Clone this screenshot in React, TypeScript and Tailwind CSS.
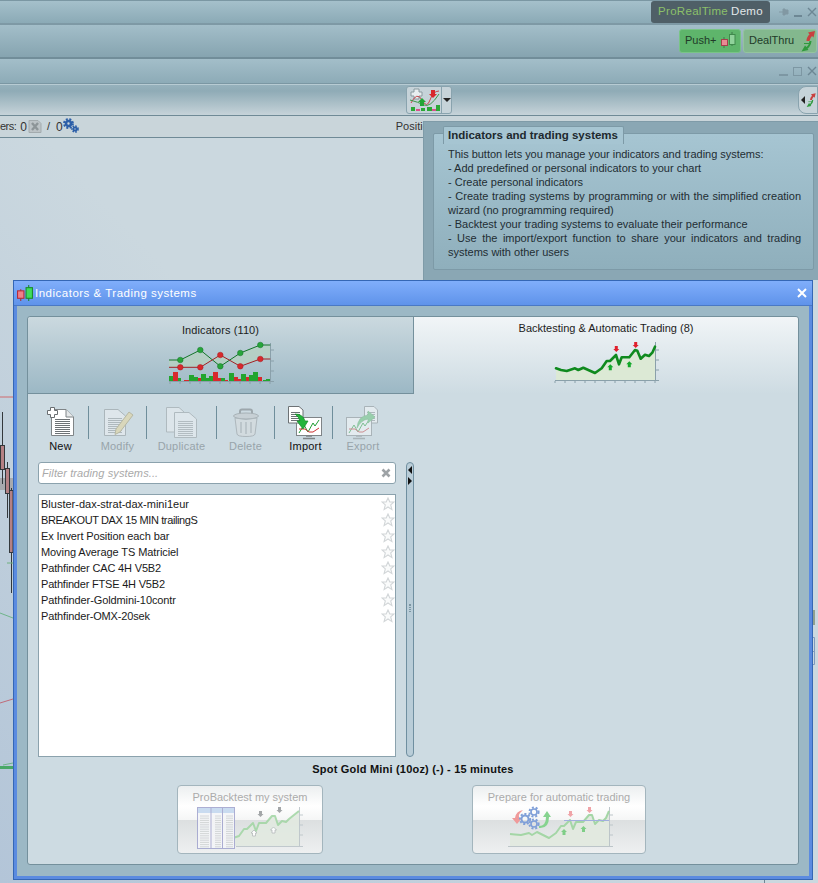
import React from "react";

const systems = [
  { name: "Bluster-dax-strat-dax-mini1eur", cls: "tracking-normal" },
  { name: "BREAKOUT DAX 15 MIN trailingS", cls: "tracking-[-0.37px]" },
  { name: "Ex Invert Position each bar", cls: "tracking-[-0.12px]" },
  { name: "Moving Average TS Matriciel", cls: "tracking-[-0.08px]" },
  { name: "Pathfinder CAC 4H V5B2", cls: "tracking-[-0.16px]" },
  { name: "Pathfinder FTSE 4H V5B2", cls: "tracking-[-0.2px]" },
  { name: "Pathfinder-Goldmini-10contr", cls: "tracking-[-0.1px]" },
  { name: "Pathfinder-OMX-20sek", cls: "tracking-[-0.15px]" },
];

const backtestLine =
  "556,368.3 561,370 566.7,371 575,368.3 578.3,370 583.3,367.7 595,373 601.7,368.3 606.7,361 610,361 616,355 619,364.3 621.7,357.3 629.3,357.3 635,350 637.3,350.7 640.7,358.7 645,354.7 649,356 652.3,352.7 655,346.7";

function Sep() {
  return <div className="w-px h-[33px] bg-[#6f8e9b] shrink-0 self-start" />;
}

function DocLines({ x, y, w, n, c = "#8a8f92" }: { x: number; y: number; w: number; n: number; c?: string }) {
  return (
    <g stroke={c} strokeWidth="1">
      {Array.from({ length: n }).map((_, i) => (
        <line key={i} x1={x} x2={x + w} y1={y + i * 2 + 0.5} y2={y + i * 2 + 0.5} />
      ))}
    </g>
  );
}

function NewIcon() {
  return (
    <svg width="30" height="32" viewBox="0 0 30 32">
      <path d="M5.5 3.5H20L27.5 11V29.5H5.5Z" fill="#fff" stroke="#7f8487" />
      <path d="M20 3.5V11H27.5" fill="#e6e9ea" stroke="#7f8487" />
      <DocLines x={9} y={13} w={15} n={8} c="#6d7275" />
      <path d="M4.5 1.5H8.5V4.5H11.5V8.5H8.5V11.5H4.5V8.5H1.5V4.5H4.5Z" fill="#fff" stroke="#6a6f72" />
    </svg>
  );
}

function ModifyIcon() {
  return (
    <svg width="34" height="32" viewBox="0 0 34 32" className="opacity-45">
      <path d="M3.5 3.5H17L24.5 10V29.5H3.5Z" fill="#f3f5f6" stroke="#848a8d" />
      <DocLines x={7} y={12} w={14} n={8} />
      <path d="M28 6L32 9L19 26L14 28.5L15 23Z" fill="#e8d48c" stroke="#9b8d58" />
    </svg>
  );
}

function DuplicateIcon() {
  return (
    <svg width="34" height="33" viewBox="0 0 34 33" className="opacity-40">
      <path d="M1.5 1.5H14L19 6V26H1.5Z" fill="#f3f5f6" stroke="#848a8d" />
      <path d="M9.5 6.5H24L31.5 13V31.5H9.5Z" fill="#f7f8f9" stroke="#848a8d" />
      <DocLines x={13} y={15} w={15} n={8} />
    </svg>
  );
}

function DeleteIcon() {
  return (
    <svg width="30" height="30" viewBox="0 0 30 30" className="opacity-50">
      <path d="M9 6V3.5Q9 1.5 11 1.5H19Q21 1.5 21 3.5V6" fill="none" stroke="#6f7578" strokeWidth="2" />
      <ellipse cx="15" cy="8" rx="12.5" ry="3" fill="#c2c7ca" stroke="#82888b" />
      <path d="M4 10L6 26Q6.5 28.5 15 28.5Q23.5 28.5 24 26L26 10Q15 13 4 10Z" fill="#d8dcde" stroke="#8e9497" />
      <path d="M10 14V25M15 14V26M20 14V25" stroke="#9ca2a5" strokeWidth="1.5" />
    </svg>
  );
}

function ScreenChart() {
  return (
    <g>
      <rect x="13.5" y="11.5" width="25" height="18" fill="#fff" stroke="#7f8487" />
      <path d="M16 27L21 19L25 26L30 17L32 20L36 14" fill="none" stroke="#1f9d33" strokeWidth="1" />
      <path d="M16 23H22L26 26H30L36 22" fill="none" stroke="#c33" strokeWidth="1" />
      <path d="M23 30H29M20 32.5H32" stroke="#7f8487" strokeWidth="1.5" />
    </g>
  );
}

function ImportIcon() {
  return (
    <svg width="34" height="34" viewBox="0 0 34 34" className="overflow-visible">
      <g transform="translate(-5 0)">
        <ScreenChart />
      </g>
      <path d="M0.5 0.5H11L15 4V17H0.5Z" fill="#fff" stroke="#6d7275" />
      <DocLines x={3} y={6} w={9} n={5} c="#6d7275" />
      <path d="M7 8Q15 8 17 15H20L15 23L9 15H12Q11 11 7 8Z" fill="#23b43c" stroke="#128a27" strokeWidth="0.7" />
    </svg>
  );
}

function ExportIcon() {
  return (
    <svg width="34" height="34" viewBox="0 0 34 34" className="opacity-45 overflow-visible">
      <path d="M18.5 0.5H28L31.5 4V17H18.5Z" fill="#fff" stroke="#7f8487" />
      <DocLines x={21} y={6} w={8} n={5} />
      <g transform="translate(-13 0)">
        <ScreenChart />
      </g>
      <path d="M11 22Q12 10 22 9V5L29 11L22 17V13Q15 14 11 22Z" fill="#59c06b" stroke="#3f9f50" strokeWidth="0.6" />
    </svg>
  );
}

function Star() {
  return (
    <svg width="14" height="14" viewBox="0 0 14 14">
      <path
        d="M7 1L8.8 5H13L9.7 7.9L10.9 12.6L7 10L3.1 12.6L4.3 7.9L1 5H5.2Z"
        fill="#fafbfb"
        stroke="#d2d6d8"
        strokeWidth="1.1"
      />
    </svg>
  );
}

function DownArrow({ x, y, c }: { x: number; y: number; c: string }) {
  return <path d={`M${x - 1.5} ${y - 3}H${x + 1.5}V${y}H${x + 3}L${x} ${y + 3}L${x - 3} ${y}H${x - 1.5}Z`} fill={c} />;
}

function UpArrow({ x, y, c, s }: { x: number; y: number; c: string; s?: string }) {
  return (
    <path
      d={`M${x} ${y - 3}L${x + 3} ${y}H${x + 1.5}V${y + 3}H${x - 1.5}V${y}H${x - 3}Z`}
      fill={c}
      stroke={s}
      strokeWidth={s ? 0.7 : 0}
    />
  );
}

function Ticks({ x0, y, n, step }: { x0: number; y: number; n: number; step: number }) {
  return (
    <g stroke="#8aa0aa" strokeWidth="1">
      {Array.from({ length: n }).map((_, i) => (
        <line key={i} x1={x0 + i * step} x2={x0 + i * step} y1={y} y2={y + 2} />
      ))}
    </g>
  );
}

function IndicatorsChart() {
  const bars: [number, number, number, string][] = [
    [168, 4, 5, "g"], [172, 5, 9, "r"], [177, 3, 3, "g"], [183, 5, 1, "r"], [188, 5, 6, "g"], [193, 4, 4, "g"],
    [197, 3, 3, "r"], [200, 5, 7, "g"], [205, 3, 3, "g"], [208, 4, 5, "g"], [212, 5, 9, "r"], [217, 3, 3, "r"],
    [220, 4, 3, "g"], [224, 3, 1, "r"], [228, 5, 8, "g"], [233, 4, 4, "r"], [237, 3, 2, "r"], [240, 5, 7, "g"],
    [245, 3, 4, "r"], [248, 4, 6, "g"], [252, 5, 9, "g"], [257, 4, 4, "r"], [262, 3, 1, "g"], [265, 4, 2, "g"],
  ];
  return (
    <svg width="120" height="50" viewBox="160 340 120 50">
      <polygon points="168,361 179.3,361 199.3,351 219.3,367.3 239.3,354 259.3,346 269.3,346 269.3,360 259.3,360 239.3,367.3 219.3,356 199.3,368.3 179.3,368.3 168,368.3" fill="#b5d2c0" opacity="0.75" />
      {bars.map(([x, w, h, c], i) => (
        <rect key={i} x={x} y={382 - h} width={w} height={h} fill={c === "g" ? "#23a52f" : "#d8282c"} />
      ))}
      <path d="M269.5 344V382.5M168 382.5H273M269.5 351H273M269.5 362H273M269.5 372H273" stroke="#8aa0aa" fill="none" />
      <Ticks x0={169} y={383} n={11} step={10} />
      <polyline points="168,361 179.3,361 199.3,351 219.3,367.3 239.3,354 259.3,346 269.3,346" fill="none" stroke="#14752a" />
      <polyline points="168,368.3 179.3,368.3 199.3,368.3 219.3,356 239.3,367.3 259.3,360 269.3,360" fill="none" stroke="#a32024" />
      {[[179.3, 361], [199.3, 351], [219.3, 367.3], [239.3, 354], [259.3, 346]].map(([x, y], i) => (
        <circle key={i} cx={x} cy={y} r="2.8" fill="#27a53a" stroke="#14752a" strokeWidth="0.5" />
      ))}
      {[[179.3, 368.3], [199.3, 368.3], [219.3, 356], [239.3, 367.3], [259.3, 360]].map(([x, y], i) => (
        <circle key={i} cx={x} cy={y} r="2.8" fill="#d8282c" stroke="#a32024" strokeWidth="0.5" />
      ))}
    </svg>
  );
}

function BacktestChart() {
  return (
    <svg width="120" height="50" viewBox="546 340 120 50">
      <polygon points={`${backtestLine} 655,380 556,380`} fill="#dce9d5" />
      <path d="M655.5 342V380.5M555 380.5H659M655.5 350H659M655.5 360H659M655.5 370H659" stroke="#8aa0aa" fill="none" />
      <Ticks x0={555} y={381} n={11} step={10} />
      <polyline points={backtestLine} fill="none" stroke="#0f8a1e" strokeWidth="2.6" strokeLinejoin="round" strokeLinecap="round" />
      <DownArrow x={616.3} y={349} c="#e0202c" />
      <DownArrow x={635.7} y={345} c="#e0202c" />
      <UpArrow x={610.3} y={367.3} c="#12a82a" />
      <UpArrow x={629.3} y={364.3} c="#12a82a" />
    </svg>
  );
}

function ProBacktestArt() {
  const pts = "232,838 238,836 243,829 246,829 252,823 255,831 258,823 265,823 271,816 274,816 277,825 281,821 285,822 288,819 298,811";
  return (
    <svg width="146" height="52" viewBox="177 802 146 52" className="opacity-90">
      <polygon points={`${pts} 298,846 232,846`} fill="#e2e9e0" />
      <path d="M298.5 807V846.5M235 846.5H302M298.5 815H302M298.5 825H302M298.5 835H302" stroke="#bcc5c9" fill="none" />
      <polyline points={pts} fill="none" stroke="#a4d6a6" strokeWidth="2" strokeLinejoin="round" />
      <DownArrow x={259.5} y={814} c="#9a9d9f" />
      <DownArrow x={278.5} y={810} c="#9a9d9f" />
      <UpArrow x={253} y={833} c="#fff" s="#a8adaf" />
      <UpArrow x={272.5} y={830} c="#fff" s="#a8adaf" />
      <rect x="196.5" y="807.5" width="37" height="41" fill="#f4f6f8" stroke="#a4a6cf" />
      <rect x="197" y="808" width="36" height="5" fill="#c4d8ef" />
      <path d="M210 808V848M221.5 808V848" stroke="#a4a6cf" />
      {Array.from({ length: 15 }).map((_, i) => (
        <path key={i} d={`M199 ${816 + i * 2.2}H208M214 ${816 + i * 2.2}H220M225 ${816 + i * 2.2}H232`} stroke="#c6c9cc" strokeWidth="0.8" />
      ))}
    </svg>
  );
}

function AutoTradeArt() {
  const pts = "509,834 514,834.5 520,835 528,833 531,835 536,832 548,838 555,833 560,826 563,826 569,820 572,829 575,822 582,822 588,815 591,815 594,824 598,820 602,821 605,818 608,811";
  const Gear = ({ x, y, r }: { x: number; y: number; r: number }) => (
    <g fill="none" stroke="#7f9fd8">
      <circle cx={x} cy={y} r={r} strokeWidth={r * 0.55} />
      <circle cx={x} cy={y} r={r + 1.6} strokeWidth="2" strokeDasharray="2 1.8" />
    </g>
  );
  return (
    <svg width="174" height="52" viewBox="472 802 174 52">
      <polygon points={`${pts} 608,846 509,846`} fill="#e2e9e0" />
      <path d="M608.5 807V846.5M507 846.5H612M608.5 815H612M608.5 825H612M608.5 835H612" stroke="#bcc5c9" fill="none" />
      <polyline points={pts} fill="none" stroke="#a4d6a6" strokeWidth="2" strokeLinejoin="round" />
      <path d="M563 820.5H608" stroke="#a0aede" strokeWidth="1" />
      <DownArrow x={569.5} y={814} c="#f0a4a8" />
      <DownArrow x={588.5} y={810} c="#f0a4a8" />
      <UpArrow x={563} y={832} c="#7fce87" />
      <UpArrow x={582.5} y={829} c="#7fce87" />
      <path d="M516 824L511 818H514Q515 811 522 810L519 813Q517 815 518 818H521Z" fill="#ef9a9a" />
      <Gear x={524} y={819} r={3.5} />
      <Gear x={533} y={812} r={3} />
      <Gear x={533} y={824} r={3} />
      <path d="M538 826Q545 826 545 817H542L546 811L550 817H548Q548 829 538 828Z" fill="#86d38f" />
    </svg>
  );
}

function DealThruIcon({ w = 18, h = 22 }: { w?: number; h?: number }) {
  return (
    <svg width={w} height={h} viewBox="0 0 18 22">
      <path d="M16 1L9 2.5L10.5 4.5Q7.5 7 7.5 11H10.5Q11 8 13 6L14.5 7.5Z" fill="#c8413f" />
      <path d="M10.5 11Q10 15 7.5 17L6 15.5L2.5 21.5L9.5 20L8.5 18.8Q12 16 12.5 11Z" fill="#2f9a3d" />
      <path d="M5 13.5H12" stroke="#2f9a3d" strokeWidth="1" />
    </svg>
  );
}

function BackgroundChart() {
  return (
    <svg className="absolute left-0 top-0 pointer-events-none" width="818" height="883" viewBox="0 0 818 883">
      <path d="M0 397H13" stroke="#d06a6e" />
      <rect x="0" y="478" width="13" height="12" fill="#a7a9ae" />
      <path d="M2.5 412V484M7.5 462V518M11.5 488V593" stroke="#33383c" />
      <rect x="0.5" y="445.5" width="4" height="24" fill="#b48185" stroke="#33383c" />
      <rect x="5.5" y="468.5" width="4" height="25" fill="#b48185" stroke="#33383c" />
      <rect x="9.5" y="490.5" width="3.5" height="62" fill="#b48185" stroke="#33383c" />
      <path d="M7 563H13" stroke="#6fb07e" />
      <path d="M0 613L13 618" stroke="#6fb58a" />
      <path d="M0 703L13 699" stroke="#c06b78" />
      <rect x="0" y="766" width="13" height="3" fill="#49a868" />
      <path d="M3 765L13 763" stroke="#6fb58a" />
      <rect x="813" y="610" width="2" height="15" fill="#8f9f8f" />
      <path d="M813 637.5H814.5V651.5H813M813 651.5H814.5V664.5H813" fill="none" stroke="#7f98bd" />
      <path d="M764.5 880V883" stroke="#6f8694" />
    </svg>
  );
}

function ChartButton() {
  return (
    <div className="w-[50px] h-[28px] flex rounded-[3px] border border-[#89a3ae] bg-[#c6d3d9] mt-[1px]">
      <div className="w-[35px] border-r border-[#89a3ae] flex items-center justify-center">
        <svg width="33" height="24" viewBox="0 0 33 24">
          <path d="M3 4H6V1H11V4H14V8H11V11H6V8H3Z" fill="#e8eef0" stroke="#8a9a9f" />
          <path d="M3 15Q9 3 14 12T22 12T31 3" fill="none" stroke="#c4464a" />
          <path d="M2 12Q10 14 16 17T31 6" fill="none" stroke="#3a9a4a" />
          <path d="M23 2H27V6H29L25 10L21 6H23Z" fill="#d8282c" />
          <path d="M14 10L18 14H16V18H12V14H10Z" fill="#22a535" />
          <path d="M3 19H7V23H3ZM19 19H24V23H19ZM28 17H32V23H28ZM13 20H17V23H13Z" fill="#2aa836" />
          <path d="M8 21H12V23H8ZM24 21H28V23H24Z" fill="#d8508a" />
        </svg>
      </div>
      <div className="flex-1 flex items-center justify-center">
        <div className="w-0 h-0 border-x-[4px] border-x-transparent border-t-[4px] border-t-[#222]" />
      </div>
    </div>
  );
}

export default function App() {
  return (
    <div className="relative w-[818px] h-[883px] overflow-hidden font-['Liberation_Sans',Arial,sans-serif] text-[11px] text-[#1c1c1c] bg-[#c7d4da]">
      <div className="flex flex-col h-full bg-[linear-gradient(to_bottom_left,#cbd8df_55%,#b3c5d8)]">
        {/* window title row */}
        <div className="h-[25px] shrink-0 border-t border-[#7b97a3] border-b-2 border-b-[#7e99a5] bg-linear-to-b from-[#a5c0cb] to-[#8baab6] flex items-center justify-end">
          <div className="w-[119px] h-[22px] rounded-[3px] bg-[#4f5f67] flex items-center justify-center text-[11.5px] tracking-[0.3px]">
            <span className="text-[#8cc06a]">ProRealTime</span>
            <span className="text-[#e3e8ea] ml-[3px]">Demo</span>
          </div>
          <div className="w-[48px] flex items-center gap-[5px] pl-[8px]">
            <svg width="11" height="10" viewBox="0 0 11 10">
              <path d="M1 5H5M5 2H7V8H5ZM7 3H10V7H7Z" fill="#8198a3" stroke="#8198a3" />
            </svg>
            <div className="w-[8px] h-[2px] bg-[#6d8794] mt-[8px]" />
            <svg width="10" height="10" viewBox="0 0 10 10">
              <path d="M1 1L9 9M9 1L1 9" stroke="#6d8794" strokeWidth="1.4" />
            </svg>
          </div>
        </div>
        {/* order buttons row */}
        <div className="h-[34px] shrink-0 border-b-2 border-b-[#718d99] bg-linear-to-b from-[#a3bec9] to-[#86a4b0] flex items-center justify-end gap-[2px] pr-px pb-[1px]">
          <div className="w-[62px] h-[24px] rounded-[3px] bg-[#5eb56b] border border-[#79c486] flex items-center pl-[5px] text-[#213a28]">
            <span>Push+</span>
            <svg className="ml-[3px]" width="16" height="18" viewBox="0 0 16 18">
              <path d="M4 5V16M12 0V14" stroke="#3f7a4c" />
              <rect x="1.5" y="7.5" width="6" height="6" fill="#e98a94" stroke="#a5404c" />
              <rect x="9.5" y="2.5" width="5.5" height="10" fill="#8fd29a" stroke="#3f8a4c" />
            </svg>
          </div>
          <div className="w-[74px] h-[24px] rounded-[3px] bg-[#83b88e] border border-[#94c49e] flex items-center pl-[5px] text-[#213a28]">
            <span>DealThru</span>
            <span className="ml-[5px]">
              <DealThruIcon w={18} h={22} />
            </span>
          </div>
        </div>
        {/* chart title row */}
        <div className="h-[25px] shrink-0 border-b border-b-[#7b97a3] bg-linear-to-b from-[#a3bec9] to-[#8dabb7] flex items-center justify-end gap-[5px] pr-px">
          <div className="w-[9px] h-[2px] bg-[#7d97a3] mt-[7px]" />
          <div className="w-[9px] h-[9px] border border-[#7d97a3]" />
          <svg width="10" height="10" viewBox="0 0 10 10">
            <path d="M1 1L9 9M9 1L1 9" stroke="#6d8794" strokeWidth="1.4" />
          </svg>
        </div>
        {/* chart toolbar */}
        <div className="h-[32px] shrink-0 border-t border-t-[#b7cbd3] border-b border-b-[#6f8a96] bg-[linear-gradient(to_bottom,#96b1bc,#8fabb6_20%,#c6d3d9)] flex items-start pl-[406px]">
          <ChartButton />
          <div className="ml-[346px] mt-[1px] w-[20px] h-[28px] rounded-l-[8px] border border-[#89a3ae] bg-[#c6d3d9] flex items-center pl-[2px]">
            <div className="w-0 h-0 border-y-[4px] border-y-transparent border-r-[4px] border-r-[#222]" />
            <DealThruIcon w={12} h={24} />
          </div>
        </div>
        {/* positions status row */}
        <div className="h-[22px] shrink-0 border-b border-b-[#6f8a96] bg-[#c9d5da] flex items-center text-[#333]">
          <span className="tracking-[-0.5px]">ers:</span>
          <span className="ml-[4px] text-[12px]">0</span>
          <svg className="ml-[1px]" width="14" height="13" viewBox="0 0 14 13">
            <path d="M1 .5H10L13 3.5V12.5H1Z" fill="#bcc3c6" stroke="#a3abae" />
            <path d="M4 3L10 10M10 3L4 10" stroke="#8d9598" strokeWidth="2.4" />
          </svg>
          <span className="ml-[5px]">/</span>
          <span className="ml-[6px] text-[12px]">0</span>
          <svg className="-mt-[3px]" width="16" height="15" viewBox="0 0 16 15">
            <g fill="none" stroke="#2c5fa8">
              <circle cx="5.5" cy="5.5" r="2.5" strokeWidth="2.6" />
              <circle cx="5.5" cy="5.5" r="4.4" strokeWidth="2" strokeDasharray="2 1.5" />
              <circle cx="12" cy="11" r="1.6" strokeWidth="1.8" />
              <circle cx="12" cy="11" r="3" strokeWidth="1.6" strokeDasharray="1.6 1.2" />
            </g>
          </svg>
          <span className="ml-[317px]">Positions</span>
        </div>
        <div className="flex-1" />
      </div>

      <BackgroundChart />

      {/* Help callout over the toolbar */}
      <div className="absolute left-[423px] top-[121px] w-[395px] h-[159px] bg-[#8aa7b4] border-l border-t border-[#7f9ba8] pt-[11px] pl-[9px] pr-[4px] text-[#222d33]">
        <div className="relative h-[137px] rounded-[2px] border border-[#7d9aa7] bg-linear-to-b from-[#a6c5d2] to-[#8fafbc] pl-[14px] pr-[12px] pt-[13px]">
          <div className="absolute left-[9px] -top-[8px] w-[181px] h-[18px] rounded-t-[2px] border border-b-0 border-[#7d9aa7] bg-[#a6c5d2] pl-[4px] font-bold text-[11.5px] leading-[16px] text-[#20292e] whitespace-nowrap">
            Indicators and trading systems
          </div>
          <div className="leading-[14px] text-justify text-[11px]">
            <p className="text-left whitespace-nowrap tracking-[-0.03px]">This button lets you manage your indicators and trading systems:</p>
            <p className="text-left whitespace-nowrap">- Add predefined or personal indicators to your chart</p>
            <p className="text-left whitespace-nowrap">- Create personal indicators</p>
            <p>- Create trading systems by programming or with the simplified creation wizard (no programming required)</p>
            <p className="text-left whitespace-nowrap">- Backtest your trading systems to evaluate their performance</p>
            <p>- Use the import/export function to share your indicators and trading systems with other users</p>
          </div>
        </div>
      </div>

      {/* Indicators & Trading systems dialog */}
      <div className="absolute left-[13px] top-[280px] w-[800px] h-[600px] border border-[#3567b5] bg-[#5b8be0] flex flex-col pb-[3px] pl-[3px] pr-[3px]">
        <div className="h-[25px] shrink-0 -mx-[3px] border-b border-b-[#4a79c4] bg-linear-to-b from-[#80aefb] to-[#5f93ea] flex items-center pl-[3px] pr-[5px]">
          <svg width="16" height="17" viewBox="0 0 15 16">
            <path d="M3.5 4V15" stroke="#a83030" />
            <path d="M11 0V15" stroke="#1a8a2a" />
            <rect x="0.5" y="5.5" width="6" height="7" fill="#f0808a" stroke="#b52a35" />
            <rect x="8.5" y="2.5" width="6" height="10" fill="#3fdc5c" stroke="#1a8a2a" />
          </svg>
          <span className="ml-[2px] mt-[2px] text-white text-[11.5px] tracking-[0.5px]">Indicators &amp; Trading systems</span>
          <svg className="ml-auto" width="10" height="10" viewBox="0 0 10 10">
            <path d="M1 1L9 9M9 1L1 9" stroke="#fff" strokeWidth="2" />
          </svg>
        </div>
        <div className="flex-1 min-h-0 bg-[#9cb8c5] pt-[10px] px-[10px] pb-[11px] flex flex-col">
          <div className="flex-1 min-h-0 flex flex-col rounded-[3px] border border-[#74909c] bg-[#cddbe2]">
            {/* Tabs */}
            <div className="flex h-[77px] shrink-0">
              <div className="w-[386px] shrink-0 rounded-tl-[3px] border-b border-b-[#74909c] border-r border-r-[#74909c] bg-linear-to-b from-[#cbd9df] to-[#9cb8c5] flex flex-col items-center pt-[6px]">
                <span className="tracking-[0.1px] leading-[14px]">Indicators (110)</span>
                <div className="mt-[2px]">
                  <IndicatorsChart />
                </div>
              </div>
              <div className="flex-1 rounded-tr-[3px] bg-linear-to-b from-[#f1f5f7] to-[#cddbe2] flex flex-col items-center pt-[4px]">
                <span className="leading-[14px]">Backtesting &amp; Automatic Trading (8)</span>
                <div className="mt-[5px]">
                  <BacktestChart />
                </div>
              </div>
            </div>
            {/* Tab content */}
            <div className="flex-1 min-h-0 flex flex-col pl-[10px] pb-[10px]">
              <div className="flex-1 min-h-0 flex gap-[10px]">
                <div className="w-[358px] shrink-0 flex flex-col">
                  {/* Actions */}
                  <div className="h-[68px] shrink-0 pt-[12px] flex -ml-[5px]">
                    <div className="w-[55px] flex flex-col items-center text-[#111]">
                      <div className="h-[33px]"><NewIcon /></div>
                      <span className="leading-[14px] tracking-[0.2px]">New</span>
                    </div>
                    <Sep />
                    <div className="w-[57px] flex flex-col items-center text-[#98a4aa]">
                      <div className="h-[33px]"><ModifyIcon /></div>
                      <span className="leading-[14px] tracking-[0.2px]">Modify</span>
                    </div>
                    <Sep />
                    <div className="w-[69px] flex flex-col items-center text-[#98a4aa]">
                      <div className="h-[33px]"><DuplicateIcon /></div>
                      <span className="leading-[14px] tracking-[0.2px]">Duplicate</span>
                    </div>
                    <Sep />
                    <div className="w-[57px] flex flex-col items-center text-[#98a4aa]">
                      <div className="h-[33px] pt-[2px]"><DeleteIcon /></div>
                      <span className="leading-[14px] tracking-[0.2px]">Delete</span>
                    </div>
                    <Sep />
                    <div className="w-[57px] flex flex-col items-center text-[#111]">
                      <div className="h-[33px] pl-[2px]"><ImportIcon /></div>
                      <span className="leading-[14px] tracking-[0.2px] pl-[4px]">Import</span>
                    </div>
                    <Sep />
                    <div className="w-[60px] flex flex-col items-center text-[#98a4aa]">
                      <div className="h-[33px]"><ExportIcon /></div>
                      <span className="leading-[14px] tracking-[0.2px]">Export</span>
                    </div>
                  </div>
                  {/* Filter */}
                  <div className="h-[22px] shrink-0 rounded-[3px] border border-[#8ba2ad] bg-white flex items-center px-[3px] italic text-[#a9a9a9] tracking-[0.1px]">
                    <span>Filter trading systems...</span>
                    <svg className="ml-auto mr-[1px]" width="10" height="10" viewBox="0 0 10 10">
                      <path d="M1.5 1.5L8.5 8.5M8.5 1.5L1.5 8.5" stroke="#9ea3a6" strokeWidth="2.6" />
                    </svg>
                  </div>
                  {/* List */}
                  <div className="mt-[10px] flex-1 min-h-0 border border-[#8ba2ad] bg-white pt-[1px] pl-[2px]">
                    {systems.map((s) => (
                      <div key={s.name} className="h-[16px] flex items-center justify-between text-[#1a1a1a]">
                        <span className={s.cls}>{s.name}</span>
                        <Star />
                      </div>
                    ))}
                  </div>
                </div>
                {/* Splitter */}
                <div className="w-[8px] flex flex-col items-center rounded-[4px] border border-[#6f8fa0] bg-[#b9cdd8] mt-[68px] relative">
                  <div className="mt-[3px] w-0 h-0 border-y-[4px] border-y-transparent border-r-[4px] border-r-[#111]" />
                  <div className="mt-[3px] w-0 h-0 border-y-[4px] border-y-transparent border-l-[4px] border-l-[#111]" />
                  <div className="absolute top-[141px] left-[2px] w-[2px] h-[8px] border-x border-dotted border-[#7c96a3]" />
                </div>
              </div>
              {/* Instrument */}
              <div className="h-[24px] shrink-0 flex items-center justify-center font-bold text-[11px] text-[#111] tracking-[0.2px] pr-[10px] pt-[1px]">
                Spot Gold Mini (10oz) (-) - 15 minutes
              </div>
              {/* Actions */}
              <div className="flex shrink-0 pl-[139px] mt-[4px]">
                <div className="w-[146px] h-[69px] rounded-[4px] border border-[#a3b5bd] bg-[linear-gradient(to_bottom,#eceff0,#ffffff_30%,#f5f6f6_50%,#dcdfe0_51%,#eef0f1)] overflow-hidden flex flex-col items-center">
                  <span className="h-[16px] mt-[3px] text-[#ababab]">ProBacktest my system</span>
                  <div className="-mt-[3px] self-start"><ProBacktestArt /></div>
                </div>
                <div className="ml-[149px] w-[174px] h-[69px] rounded-[4px] border border-[#a3b5bd] bg-[linear-gradient(to_bottom,#eceff0,#ffffff_30%,#f5f6f6_50%,#dcdfe0_51%,#eef0f1)] overflow-hidden flex flex-col items-center">
                  <span className="h-[16px] mt-[3px] text-[#ababab]">Prepare for automatic trading</span>
                  <div className="-mt-[3px] self-start"><AutoTradeArt /></div>
                </div>
              </div>
            </div>
          </div>
        </div>
      </div>
    </div>
  );
}
